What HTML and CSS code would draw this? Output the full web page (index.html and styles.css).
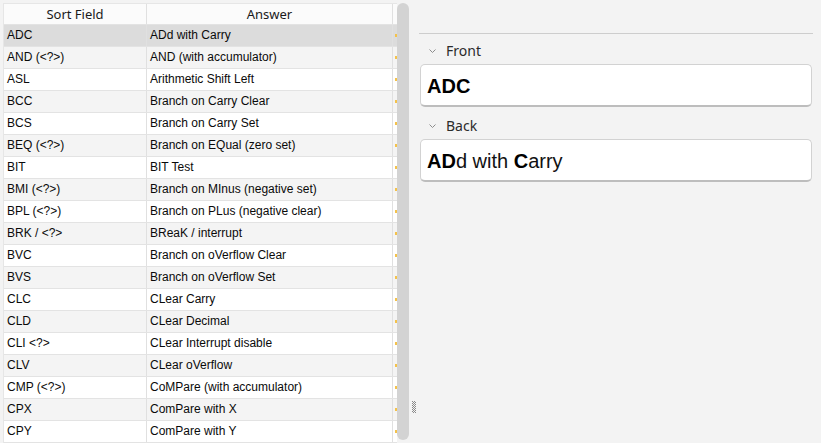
FILE: index.html
```html
<!DOCTYPE html>
<html>
<head>
<meta charset="utf-8">
<link rel="stylesheet" href="styles.css">
</head>
<body>
<div class="app">
  <div class="left">
    <div class="grid">
      <div class="row head">
        <div class="c1">Sort Field</div>
        <div class="c2">Answer</div>
        <div class="c3"></div>
      </div>
      <div class="row sel"><div class="c1">ADC</div><div class="c2">ADd with Carry</div><div class="c3"><i></i></div></div>
      <div class="row alt"><div class="c1">AND (&lt;?&gt;)</div><div class="c2">AND (with accumulator)</div><div class="c3"><i></i></div></div>
      <div class="row"><div class="c1">ASL</div><div class="c2">Arithmetic Shift Left</div><div class="c3"><i></i></div></div>
      <div class="row alt"><div class="c1">BCC</div><div class="c2">Branch on Carry Clear</div><div class="c3"><i></i></div></div>
      <div class="row"><div class="c1">BCS</div><div class="c2">Branch on Carry Set</div><div class="c3"><i></i></div></div>
      <div class="row alt"><div class="c1">BEQ (&lt;?&gt;)</div><div class="c2">Branch on EQual (zero set)</div><div class="c3"><i></i></div></div>
      <div class="row"><div class="c1">BIT</div><div class="c2">BIT Test</div><div class="c3"><i></i></div></div>
      <div class="row alt"><div class="c1">BMI (&lt;?&gt;)</div><div class="c2">Branch on MInus (negative set)</div><div class="c3"><i></i></div></div>
      <div class="row"><div class="c1">BPL (&lt;?&gt;)</div><div class="c2">Branch on PLus (negative clear)</div><div class="c3"><i></i></div></div>
      <div class="row alt"><div class="c1">BRK / &lt;?&gt;</div><div class="c2">BReaK / interrupt</div><div class="c3"><i></i></div></div>
      <div class="row"><div class="c1">BVC</div><div class="c2">Branch on oVerflow Clear</div><div class="c3"><i></i></div></div>
      <div class="row alt"><div class="c1">BVS</div><div class="c2">Branch on oVerflow Set</div><div class="c3"><i></i></div></div>
      <div class="row"><div class="c1">CLC</div><div class="c2">CLear Carry</div><div class="c3"><i></i></div></div>
      <div class="row alt"><div class="c1">CLD</div><div class="c2">CLear Decimal</div><div class="c3"><i></i></div></div>
      <div class="row"><div class="c1">CLI &lt;?&gt;</div><div class="c2">CLear Interrupt disable</div><div class="c3"><i></i></div></div>
      <div class="row alt"><div class="c1">CLV</div><div class="c2">CLear oVerflow</div><div class="c3"><i></i></div></div>
      <div class="row"><div class="c1">CMP (&lt;?&gt;)</div><div class="c2">CoMPare (with accumulator)</div><div class="c3"><i></i></div></div>
      <div class="row alt"><div class="c1">CPX</div><div class="c2">ComPare with X</div><div class="c3"><i></i></div></div>
      <div class="row"><div class="c1">CPY</div><div class="c2">ComPare with Y</div><div class="c3"><i></i></div></div>
    </div>
    <div class="thumb"></div>
  </div>
  <div class="splitter">
    <svg class="grip" width="4" height="12" viewBox="0 0 4 12">
      <g fill="#8a8a8a">
        <rect x="0" y="0" width="1" height="1"/><rect x="2" y="0" width="1" height="1"/>
        <rect x="1" y="1" width="1" height="1"/><rect x="3" y="1" width="1" height="1"/>
        <rect x="0" y="2" width="1" height="1"/><rect x="2" y="2" width="1" height="1"/>
        <rect x="1" y="3" width="1" height="1"/><rect x="3" y="3" width="1" height="1"/>
        <rect x="0" y="4" width="1" height="1"/><rect x="2" y="4" width="1" height="1"/>
        <rect x="1" y="5" width="1" height="1"/><rect x="3" y="5" width="1" height="1"/>
        <rect x="0" y="6" width="1" height="1"/><rect x="2" y="6" width="1" height="1"/>
        <rect x="1" y="7" width="1" height="1"/><rect x="3" y="7" width="1" height="1"/>
        <rect x="0" y="8" width="1" height="1"/><rect x="2" y="8" width="1" height="1"/>
        <rect x="1" y="9" width="1" height="1"/><rect x="3" y="9" width="1" height="1"/>
        <rect x="0" y="10" width="1" height="1"/><rect x="2" y="10" width="1" height="1"/>
        <rect x="1" y="11" width="1" height="1"/><rect x="3" y="11" width="1" height="1"/>
      </g>
    </svg>
  </div>
  <div class="right">
    <div class="label first">
      <svg class="chev" width="7" height="4" viewBox="0 0 7 4"><polyline points="0.5,0.5 3.5,3.5 6.5,0.5" fill="none" stroke="#8c8c8c" stroke-width="1"/></svg>
      <span>Front</span>
    </div>
    <div class="field"><b>ADC</b></div>
    <div class="label">
      <svg class="chev" width="7" height="4" viewBox="0 0 7 4"><polyline points="0.5,0.5 3.5,3.5 6.5,0.5" fill="none" stroke="#8c8c8c" stroke-width="1"/></svg>
      <span>Back</span>
    </div>
    <div class="field"><b>AD</b>d with <b>C</b>arry</div>
  </div>
</div>
</body>
</html>
```

FILE: styles.css
```css
html, body {
  margin: 0;
  padding: 0;
  background: #f3f3f3;
  width: 821px;
  height: 443px;
  overflow: hidden;
}

.app {
  display: flex;
  padding: 3px 0 0 3px;
  height: 440px;
  box-sizing: border-box;
}

.left {
  display: flex;
  width: 406px;
  height: 440px;
}

.grid {
  width: 394px;
  height: 440px;
  overflow: hidden;
  background: #fff;
  border-left: 1px solid #e6e6e6;
  border-top: 1px solid #e6e6e6;
  box-sizing: border-box;
  font-family: "Liberation Sans", Arial, sans-serif;
  font-size: 12px;
  color: #0a0a0a;
}

.row {
  display: flex;
  height: 22px;
  border-bottom: 1px solid #e3e3e3;
  box-sizing: border-box;
  white-space: nowrap;
}

.row > div {
  border-right: 1px solid #e0e0e0;
  box-sizing: border-box;
  line-height: 21px;
  padding-left: 3px;
  flex: none;
  overflow: hidden;
}

.c1 { width: 143px; }
.c2 { width: 246px; }
.c3 { width: 20px; position: relative; }

.c3 i {
  position: absolute;
  left: 2px;
  top: 9px;
  width: 2px;
  height: 3px;
  background: #f4c24a;
}

.head {
  height: 21px;
  background: #fbfbfb;
  font-family: "Noto Sans", "Open Sans", sans-serif;
  font-size: 13px;
  color: #1a1a1a;
}

.head > div {
  text-align: center;
  line-height: 20px;
  padding-left: 0;
}

.row.sel { background: #dcdcdc; }
.row.alt { background: #f4f4f4; }

.thumb {
  width: 12px;
  height: 437px;
  background: #d3d3d3;
  border-radius: 6px;
}

.splitter {
  width: 10px;
  display: flex;
  flex-direction: column;
  align-items: center;
}

.grip {
  margin-top: auto;
  margin-bottom: 27px;
  display: block;
}

.right {
  width: 394px;
  margin-top: 30px;
  border-top: 1px solid #cdcdcd;
  align-self: flex-start;
}

.label {
  display: flex;
  align-items: center;
  height: 22px;
  margin: 7px 0 3px 0;
  font-family: "Noto Sans", "Open Sans", sans-serif;
  font-size: 14px;
  color: #2b2b2b;
}

.label.first { margin-top: 5px; }

.chev {
  margin: 1px 0 0 10px;
  display: block;
}

.label span { margin-left: 10px; }

.field {
  margin: 0 1px;
  height: 43px;
  box-sizing: border-box;
  background: #fff;
  border: 1px solid #d2d2d2;
  border-bottom: 2px solid #bdbdbd;
  border-radius: 5px;
  padding: 0 6px;
  font-family: "Liberation Sans", Arial, sans-serif;
  font-size: 20px;
  line-height: 42px;
  color: #111;
}

.field b { color: #000; }
```
